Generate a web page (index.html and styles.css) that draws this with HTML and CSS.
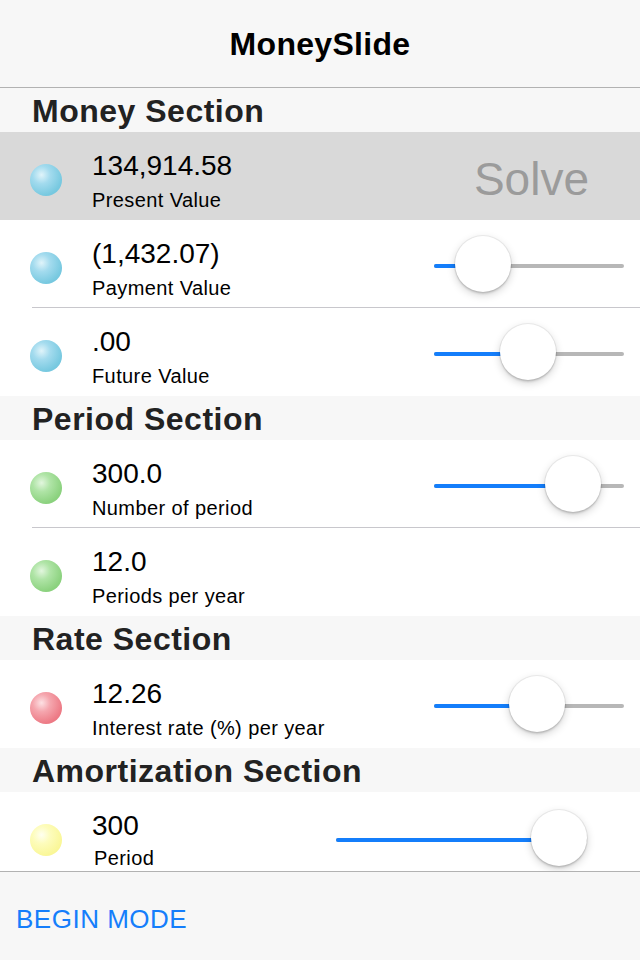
FILE: index.html
```html
<!DOCTYPE html>
<html lang="en">
<head>
<meta charset="utf-8">
<title>MoneySlide</title>
<link rel="stylesheet" href="styles.css">
</head>
<body>
<div class="app">
  <header class="nav">MoneySlide</header>
  <main class="content">
    <div class="section">Money Section</div>
    <div class="row selected">
      <span class="ball blue"></span>
      <div class="text"><div class="value">134,914.58</div><div class="label">Present Value</div></div>
      <div class="solve">Solve</div>
    </div>
    <div class="row sep">
      <span class="ball blue"></span>
      <div class="text"><div class="value">(1,432.07)</div><div class="label">Payment Value</div></div>
      <div class="slider" style="--x:49px"><span class="track"></span><span class="fill"></span><span class="thumb"></span></div>
    </div>
    <div class="row">
      <span class="ball blue"></span>
      <div class="text"><div class="value">.00</div><div class="label">Future Value</div></div>
      <div class="slider" style="--x:94px"><span class="track"></span><span class="fill"></span><span class="thumb"></span></div>
    </div>

    <div class="section">Period Section</div>
    <div class="row sep">
      <span class="ball green"></span>
      <div class="text"><div class="value">300.0</div><div class="label">Number of period</div></div>
      <div class="slider" style="--x:139px"><span class="track"></span><span class="fill"></span><span class="thumb"></span></div>
    </div>
    <div class="row">
      <span class="ball green"></span>
      <div class="text"><div class="value">12.0</div><div class="label">Periods per year</div></div>
    </div>

    <div class="section">Rate Section</div>
    <div class="row">
      <span class="ball red"></span>
      <div class="text"><div class="value">12.26</div><div class="label">Interest rate (%) per year</div></div>
      <div class="slider" style="--x:103px"><span class="track"></span><span class="fill"></span><span class="thumb"></span></div>
    </div>

    <div class="section">Amortization Section</div>
    <div class="row">
      <span class="ball yellow"></span>
      <div class="text"><div class="value">300</div><div class="label label-indent">Period</div></div>
      <div class="slider slider-wide" style="--x:223px"><span class="track"></span><span class="fill"></span><span class="thumb"></span></div>
    </div>
  </main>
  <footer class="toolbar"><span class="mode">BEGIN MODE</span></footer>
</div>
</body>
</html>
```

FILE: styles.css
```css
html, body {
  margin: 0;
  padding: 0;
}
body {
  font-family: "Liberation Sans", Arial, sans-serif;
  color: #000;
  background: #fff;
}
.app {
  width: 640px;
  height: 960px;
  display: flex;
  flex-direction: column;
  overflow: hidden;
}
.nav {
  box-sizing: border-box;
  height: 88px;
  flex: none;
  padding-top: 2px;
  line-height: 85px;
  text-align: center;
  font-size: 32px;
  font-weight: bold;
  letter-spacing: 0.3px;
  background: #f7f7f7;
  border-bottom: 1px solid #b2b2b2;
}
.content {
  flex: 1;
  overflow: hidden;
  display: flex;
  flex-direction: column;
}
.section {
  box-sizing: border-box;
  flex: none;
  height: 44px;
  padding: 2px 0 0 32px;
  line-height: 43px;
  font-size: 32px;
  font-weight: bold;
  letter-spacing: 0.5px;
  color: #222;
  background: #f7f7f7;
}
.row {
  box-sizing: border-box;
  flex: none;
  height: 88px;
  display: flex;
  align-items: flex-start;
  padding-left: 30px;
  background: #fff;
}
.row.selected {
  background: #d9d9d9;
}
.row.sep {
  background-image: linear-gradient(#c8c7cc, #c8c7cc);
  background-repeat: no-repeat;
  background-size: calc(100% - 32px) 1px;
  background-position: right bottom;
}
.ball {
  flex: none;
  width: 32px;
  height: 32px;
  margin-top: 32px;
  border-radius: 50%;
}
.ball.blue {
  background: radial-gradient(circle at 36% 34%, #e0f4fa 0, #a3dbee 30%, #78c9e0 70%, #6cc1da 100%);
}
.ball.green {
  background: radial-gradient(circle at 36% 34%, #e2f6de 0, #afe4a6 30%, #8cd27f 70%, #80cb73 100%);
}
.ball.red {
  background: radial-gradient(circle at 36% 34%, #fde1e4 0, #f5a6ae 30%, #ed7b86 70%, #e86e7a 100%);
}
.ball.yellow {
  background: radial-gradient(circle at 36% 34%, #fffff0 0, #fdfcbc 30%, #faf799 70%, #f6f289 100%);
}
.text {
  flex: 1;
  padding: 17px 0 0 30px;
  white-space: nowrap;
}
.value {
  font-size: 28px;
  line-height: 34px;
}
.label {
  margin-top: 5px;
  font-size: 20px;
  line-height: 24px;
  letter-spacing: 0.4px;
}
.label-indent {
  margin-top: 3px;
  padding-left: 2px;
}
.solve {
  margin: 21px 51px 0 0;
  font-size: 46px;
  line-height: 52px;
  color: #9b9b9b;
}
.slider {
  position: relative;
  flex: none;
  width: 190px;
  height: 56px;
  margin: 16px 16px 0 0;
}
.slider-wide {
  width: 251px;
  margin-right: 53px;
  margin-top: 18px;
}
.track, .fill {
  position: absolute;
  top: 28px;
  left: 0;
  height: 4px;
  border-radius: 2px;
}
.track {
  right: 0;
  background: #b7b7b7;
}
.fill {
  width: var(--x);
  background: #147efb;
}
.thumb {
  position: absolute;
  top: 0;
  left: calc(var(--x) - 28px);
  width: 56px;
  height: 56px;
  border-radius: 50%;
  background: #fff;
  box-shadow: 0 0 0 1px rgba(0, 0, 0, 0.06), 0 3px 8px rgba(0, 0, 0, 0.18), 0 2px 2px rgba(0, 0, 0, 0.12);
}
.toolbar {
  box-sizing: border-box;
  flex: none;
  height: 89px;
  padding: 32px 0 0 16px;
  background: #f7f7f7;
  border-top: 1px solid #b2b2b2;
}
.mode {
  display: block;
  font-size: 26px;
  line-height: 30px;
  letter-spacing: 0.5px;
  color: #157efb;
}
```
